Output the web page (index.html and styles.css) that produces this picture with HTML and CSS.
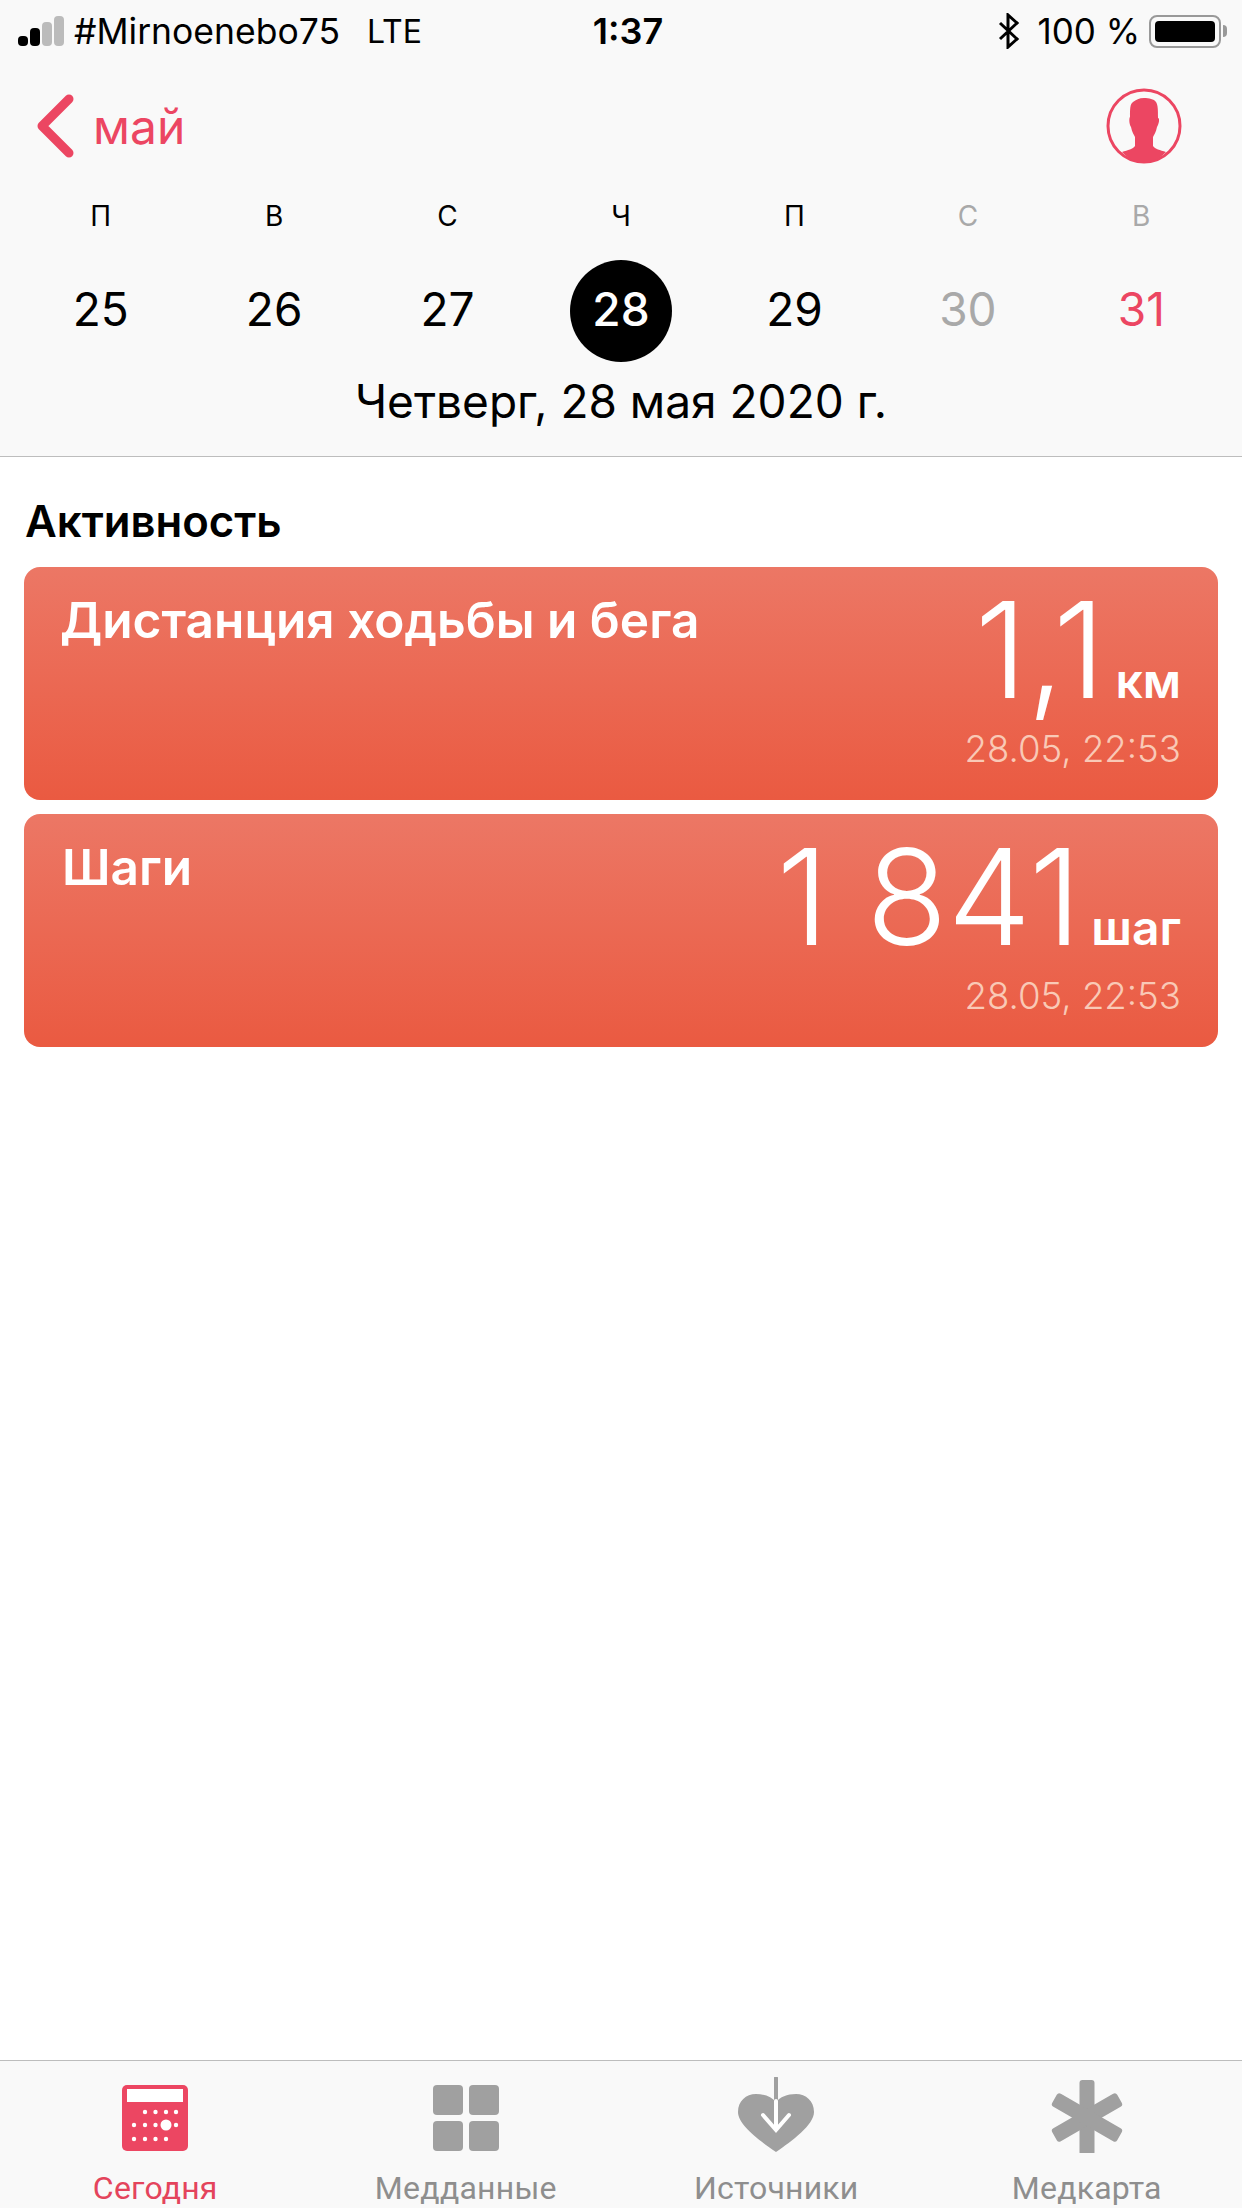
FILE: index.html
```html
<!DOCTYPE html>
<html lang="ru">
<head>
    <meta charset="UTF-8">
    <title>Здоровье</title>
    <link rel="stylesheet" href="styles.css">
</head>
<body>
    <div class="page">
        <header class="top">
            <div class="status">
                <div class="status-left">
                    <div class="signal">
                        <span class="bar b1"></span>
                        <span class="bar b2"></span>
                        <span class="bar b3"></span>
                        <span class="bar b4"></span>
                    </div>
                    <span class="carrier">#Mirnoenebo75</span>
                    <span class="net">LTE</span>
                </div>
                <div class="time">1:37</div>
                <div class="status-right">
                    <svg class="bt" width="22" height="36" viewBox="0 0 22 36">
                        <path d="M2 10 L19 26 L10 34 V2 L19 10 L2 26" fill="none" stroke="#000" stroke-width="3"/>
                    </svg>
                    <span class="percent">100 %</span>
                    <div class="battery"><div class="battery-fill"></div></div>
                    <div class="battery-nub"></div>
                </div>
            </div>
            <div class="nav">
                <a class="back">
                    <svg width="38" height="64" viewBox="0 0 38 64">
                        <path d="M33 5 L6 32 L33 59" fill="none" stroke="#ec4662" stroke-width="9" stroke-linecap="round" stroke-linejoin="round"/>
                    </svg>
                    <span>май</span>
                </a>
                <svg class="avatar" width="76" height="76" viewBox="0 0 76 76">
                    <circle cx="38" cy="38" r="36" fill="none" stroke="#ec4662" stroke-width="3"/>
                    <path d="M38 10 C43 10 48 11 50 14 C52 17 52 22 52 30 C54 30 53 36 51 39 C50 44 48 47 47 49 V58 C49 61 54 62 60 64 C53 71 46 75 38 75 C30 75 23 71 16 64 C22 62 27 61 29 58 V49 C28 47 26 44 25 39 C23 36 23 30 24 29 C24 21 24 16 27 14 C30 12 33 10 38 10 Z" fill="#ec4662"/>
                </svg>
            </div>
            <div class="week">
                <div class="wd">П</div>
                <div class="wd">В</div>
                <div class="wd">С</div>
                <div class="wd">Ч</div>
                <div class="wd">П</div>
                <div class="wd off">С</div>
                <div class="wd off">В</div>
                <div class="day">25</div>
                <div class="day">26</div>
                <div class="day">27</div>
                <div class="day"><span class="today">28</span></div>
                <div class="day">29</div>
                <div class="day off">30</div>
                <div class="day red">31</div>
            </div>
            <div class="full-date">Четверг, 28 мая 2020 г.</div>
        </header>

        <main class="content">
            <h2 class="section">Активность</h2>
            <div class="card">
                <div class="card-title">Дистанция ходьбы и бега</div>
                <div class="card-right">
                    <div class="value"><span class="num">1,1</span><span class="unit">км</span></div>
                    <div class="stamp">28.05, 22:53</div>
                </div>
            </div>
            <div class="card">
                <div class="card-title second">Шаги</div>
                <div class="card-right">
                    <div class="value"><span class="num">1 841</span><span class="unit">шаг</span></div>
                    <div class="stamp">28.05, 22:53</div>
                </div>
            </div>
        </main>

        <nav class="tabs">
            <div class="tab active">
                <svg class="tab-icon" width="76" height="76" viewBox="0 0 76 76">
                    <rect x="5" y="8" width="66" height="66" rx="5" fill="#ec4662"/>
                    <rect x="10" y="12" width="56" height="13" fill="#fff"/>
                    <g fill="#fff">
                        <circle cx="28" cy="35" r="2.2"/><circle cx="38.5" cy="35" r="2.2"/><circle cx="49" cy="35" r="2.2"/><circle cx="59" cy="35" r="2.2"/>
                        <circle cx="17" cy="48" r="2.2"/><circle cx="28" cy="48" r="2.2"/><circle cx="38.5" cy="48" r="2.2"/><circle cx="49" cy="48" r="5.5"/><circle cx="59" cy="48" r="2.2"/>
                        <circle cx="17" cy="62" r="2.2"/><circle cx="28" cy="62" r="2.2"/><circle cx="38.5" cy="62" r="2.2"/><circle cx="49" cy="62" r="2.2"/>
                    </g>
                </svg>
                <span>Сегодня</span>
            </div>
            <div class="tab">
                <svg class="tab-icon" width="76" height="76" viewBox="0 0 76 76" fill="#a0a0a0">
                    <rect x="5" y="8" width="30" height="30" rx="4"/>
                    <rect x="41" y="8" width="30" height="30" rx="4"/>
                    <rect x="5" y="44" width="30" height="30" rx="4"/>
                    <rect x="41" y="44" width="30" height="30" rx="4"/>
                </svg>
                <span>Медданные</span>
            </div>
            <div class="tab">
                <svg class="tab-icon" width="76" height="76" viewBox="0 0 76 76">
                    <path d="M38 75 C22 64 0 48 0 35 C0 24 8 17 18 17 C27 17 34 20 38 25 C42 20 49 17 58 17 C68 17 76 24 76 35 C76 48 54 64 38 75 Z" fill="#a0a0a0"/>
                    <path d="M38 1 V24" stroke="#a0a0a0" stroke-width="4" stroke-linecap="round" fill="none"/>
                    <path d="M38 24 V52 M25 38 L38 53 L51 38" stroke="#fff" stroke-width="4" stroke-linecap="round" fill="none"/>
                </svg>
                <span>Источники</span>
            </div>
            <div class="tab">
                <svg class="tab-icon" width="76" height="76" viewBox="0 0 76 76" fill="#a0a0a0">
                    <rect x="30.5" y="3" width="15" height="75" rx="3"/>
                    <rect x="30.5" y="3" width="15" height="75" rx="3" transform="rotate(60 38 40.5)"/>
                    <rect x="30.5" y="3" width="15" height="75" rx="3" transform="rotate(-60 38 40.5)"/>
                </svg>
                <span>Медкарта</span>
            </div>
        </nav>
    </div>
</body>
</html>
```

FILE: styles.css
```css
* {
    box-sizing: border-box;
}
body {
    margin: 0;
    font-family: Inter, "Noto Sans", sans-serif;
    background-color: #fff;
    color: #000;
}
.page {
    width: 1242px;
    height: 2208px;
    display: flex;
    flex-direction: column;
    overflow: hidden;
}

/* header */
.top {
    height: 457px;
    background-color: #f9f9f9;
    border-bottom: 1px solid #bdbdbd;
}
.status {
    height: 62px;
    padding: 0 15px 0 18px;
    display: grid;
    grid-template-columns: 1fr auto 1fr;
    align-items: center;
    font-size: 33px;
}
.status-left, .status-right {
    display: flex;
    align-items: center;
}
.status-right {
    justify-content: flex-end;
}
.signal {
    display: flex;
    align-items: flex-end;
    gap: 2px;
    height: 30px;
    margin-right: 10px;
}
.bar {
    width: 10px;
    border-radius: 4px;
    background-color: #000;
}
.b1 { height: 10px; }
.b2 { height: 18px; }
.b3 { height: 24px; background-color: #bbb; }
.b4 { height: 30px; background-color: #bbb; }
.carrier {
    font-size: 35.5px;
    margin-right: 27px;
}
.net {
    font-size: 32px;
}
.time {
    font-size: 36px;
    font-weight: 600;
    padding-left: 11px;
}
.bt {
    margin-right: 17px;
}
.percent {
    font-size: 35px;
    margin-right: 9px;
}
.battery {
    width: 72px;
    height: 33px;
    padding: 4px;
    border: 2px solid #999;
    border-radius: 8px;
}
.battery-fill {
    height: 100%;
    background-color: #000;
    border-radius: 4px;
}
.battery-nub {
    width: 4px;
    height: 12px;
    margin-left: 2px;
    background-color: #999;
    border-radius: 0 4px 4px 0;
}
.nav {
    height: 128px;
    padding: 0 60px 0 36px;
    display: flex;
    align-items: center;
    justify-content: space-between;
}
.back {
    display: flex;
    align-items: center;
    gap: 19px;
    font-size: 48px;
    color: #ec4662;
}
.week {
    padding: 0 14px;
    display: grid;
    grid-template-columns: repeat(7, 1fr);
    text-align: center;
}
.wd {
    font-size: 28px;
    height: 70px;
    line-height: 52px;
}
.day {
    font-size: 46px;
    height: 102px;
    line-height: 98px;
}
.off {
    color: #a9a9a9;
}
.red {
    color: #ec4662;
}
.today {
    display: inline-block;
    width: 102px;
    height: 102px;
    border-radius: 50%;
    background-color: #000;
    color: #fff;
    font-weight: 500;
}
.full-date {
    margin-top: 9px;
    text-align: center;
    font-size: 46px;
    line-height: 60px;
}

/* cards */
.content {
    flex: 1;
    padding: 0 24px;
}
.section {
    margin: 0;
    height: 110px;
    padding: 41px 1px 0;
    font-size: 43.7px;
    line-height: 48px;
    font-weight: 600;
}
.card {
    height: 233px;
    margin-bottom: 14px;
    padding: 25px 37px 0 36px;
    display: flex;
    justify-content: space-between;
    border-radius: 16px;
    background: linear-gradient(#ec7765, #ea5a41);
    color: #fff;
}
.card-title {
    font-size: 49.6px;
    line-height: 56px;
    font-weight: 600;
}
.card-title.second {
    padding-left: 2px;
}
.card-right {
    margin-top: -7px;
    text-align: right;
}
.value {
    height: 130px;
    display: flex;
    align-items: baseline;
    justify-content: flex-end;
    gap: 10px;
}
.num {
    font-size: 133px;
    line-height: 130px;
    font-weight: 300;
}
.unit {
    font-size: 48px;
    font-weight: 600;
}
.stamp {
    margin-top: 12px;
    font-size: 36.6px;
    line-height: 44px;
    font-weight: 300;
    color: #f9c9b6;
}

/* tab bar */
.tabs {
    height: 148px;
    padding-top: 16px;
    display: grid;
    grid-template-columns: repeat(4, 1fr);
    background-color: #f9f9f9;
    border-top: 1px solid #bdbdbd;
}
.tab {
    display: flex;
    flex-direction: column;
    align-items: center;
    font-family: Roboto, sans-serif;
    font-size: 32px;
    letter-spacing: 0.2px;
    color: #8e8e8e;
}
.tab-icon {
    flex: none;
}
.tab span {
    margin-top: 15px;
    line-height: 40px;
}
.tab.active {
    color: #e4445c;
}
```
